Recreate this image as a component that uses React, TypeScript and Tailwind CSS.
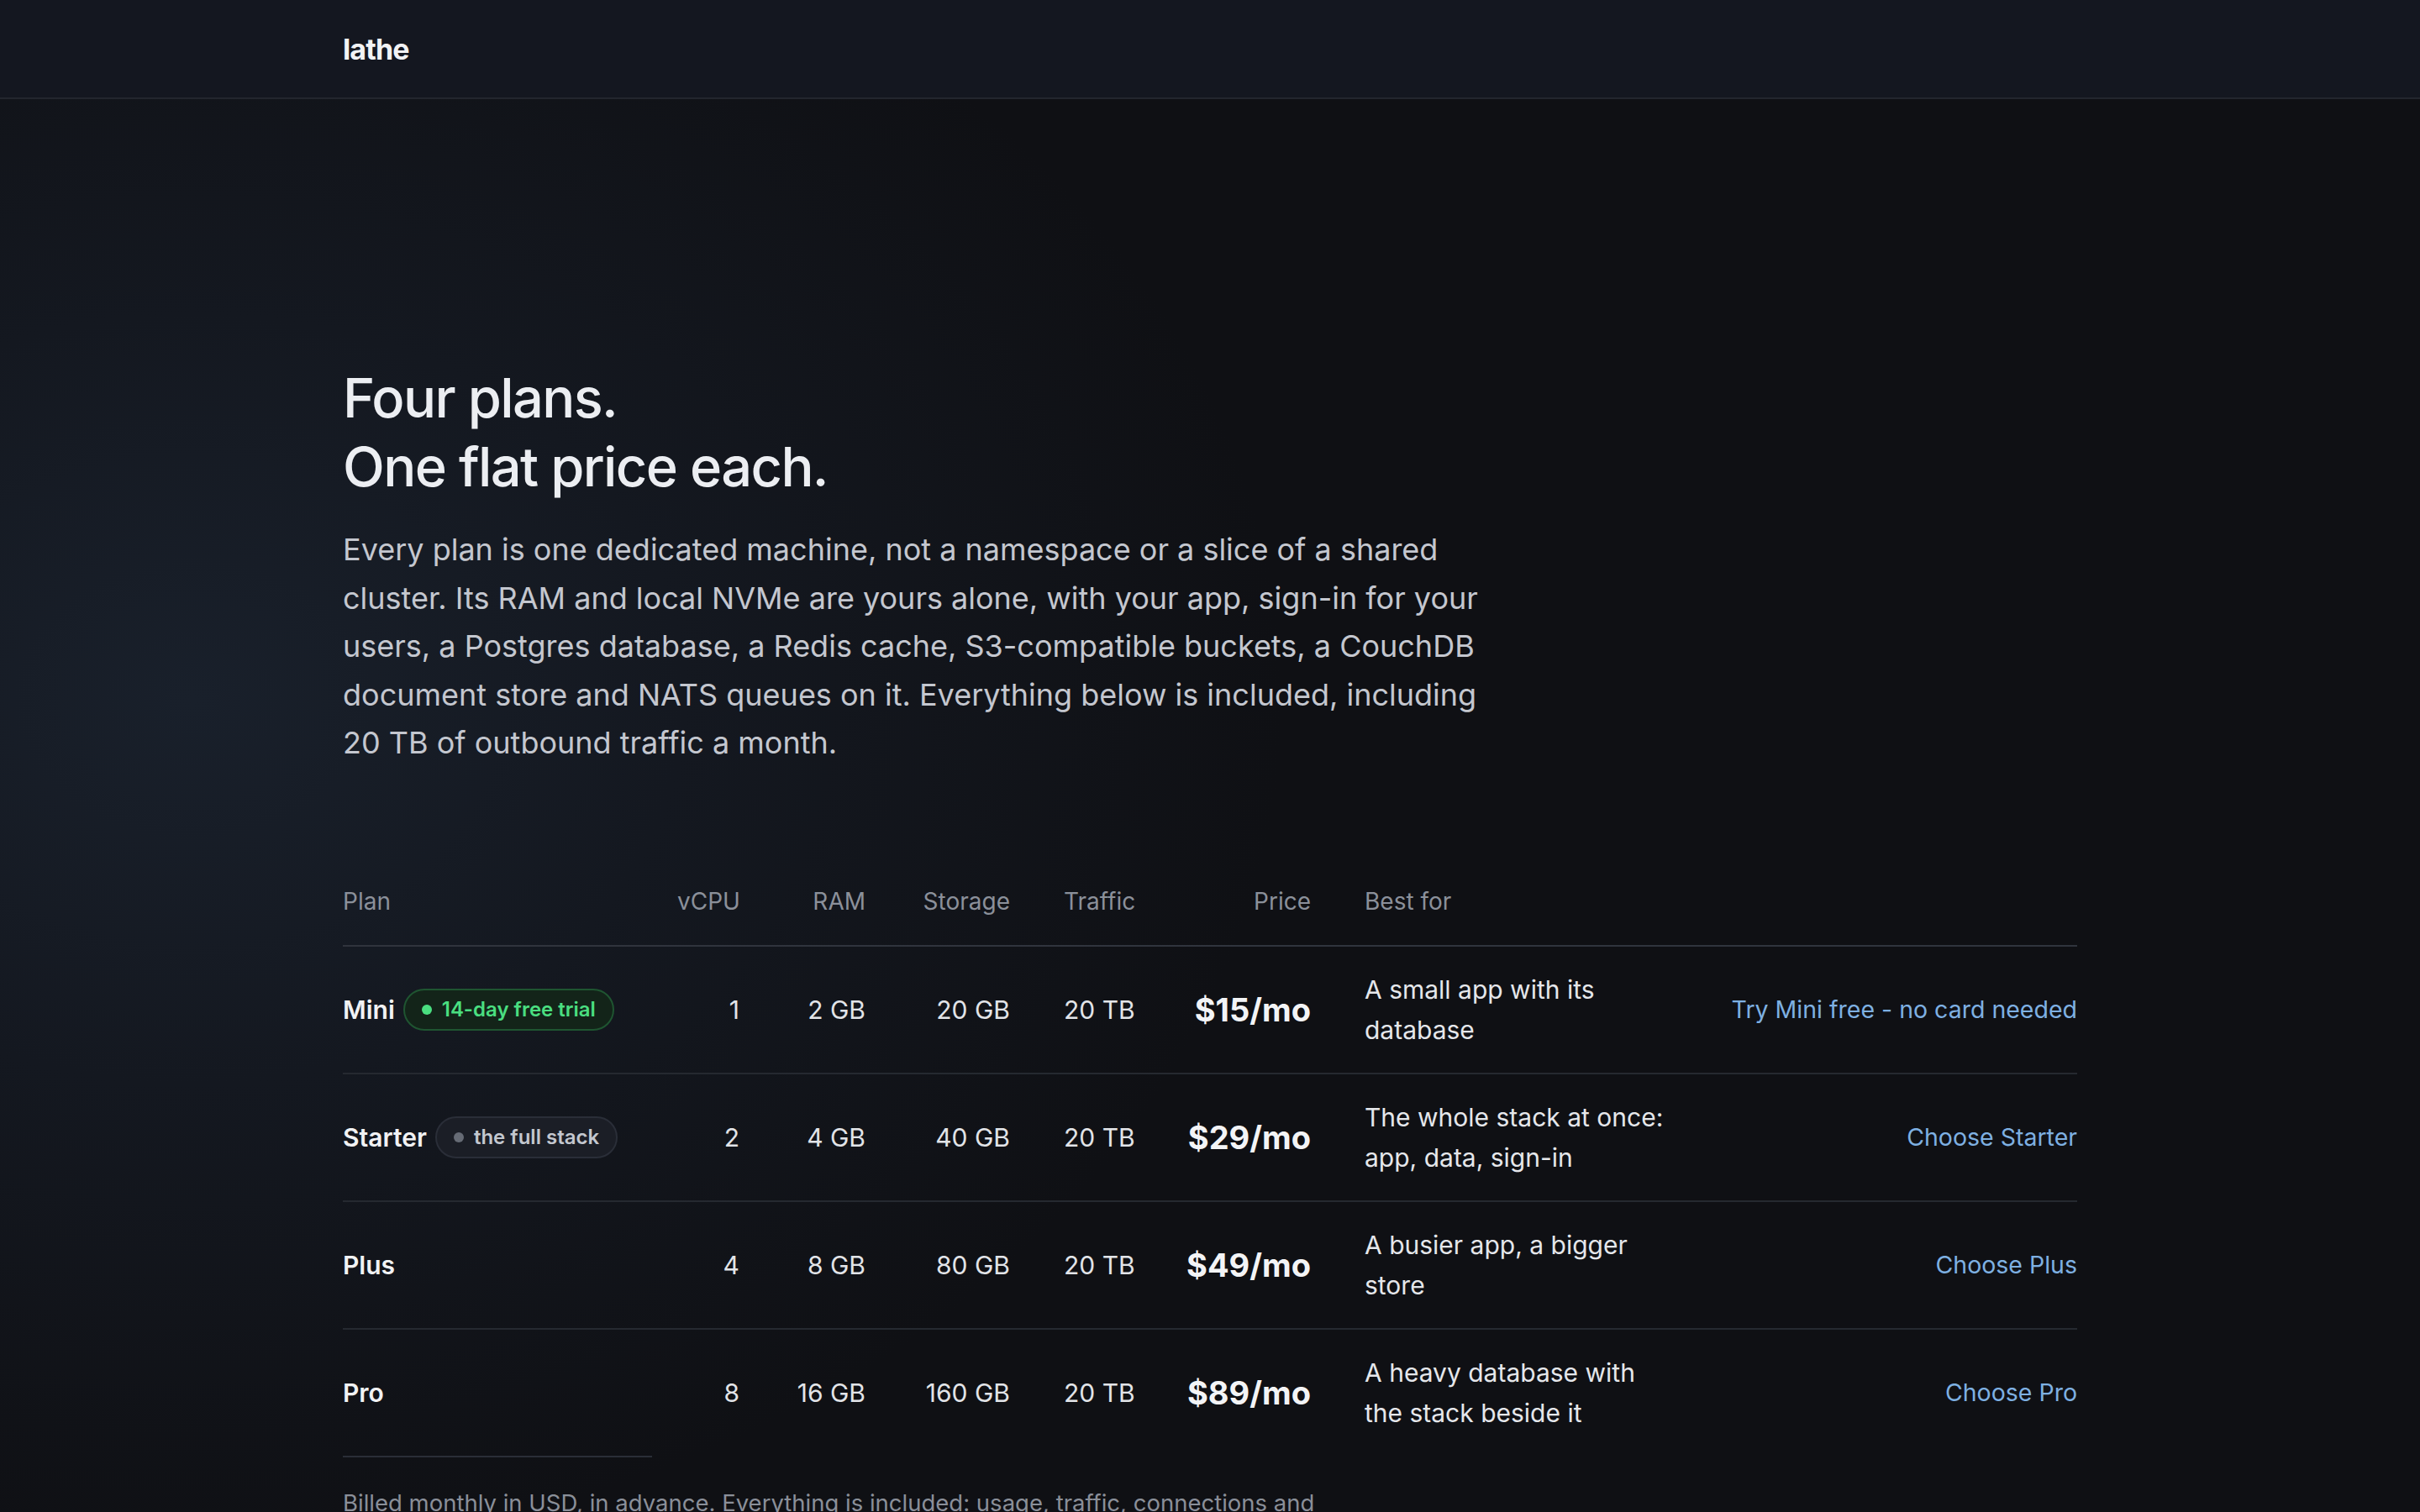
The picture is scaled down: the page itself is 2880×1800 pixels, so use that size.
import React from "react";

type Badge = { label: string; tone: "green" | "gray" };

type Plan = {
  name: string;
  badge?: Badge;
  vcpu: string;
  ram: string;
  storage: string;
  traffic: string;
  price: string;
  bestFor: string;
  cta: string;
};

const plans: Plan[] = [
  {
    name: "Mini",
    badge: { label: "14-day free trial", tone: "green" },
    vcpu: "1",
    ram: "2 GB",
    storage: "20 GB",
    traffic: "20 TB",
    price: "$15/mo",
    bestFor: "A small app with its database",
    cta: "Try Mini free - no card needed",
  },
  {
    name: "Starter",
    badge: { label: "the full stack", tone: "gray" },
    vcpu: "2",
    ram: "4 GB",
    storage: "40 GB",
    traffic: "20 TB",
    price: "$29/mo",
    bestFor: "The whole stack at once: app, data, sign-in",
    cta: "Choose Starter",
  },
  {
    name: "Plus",
    vcpu: "4",
    ram: "8 GB",
    storage: "80 GB",
    traffic: "20 TB",
    price: "$49/mo",
    bestFor: "A busier app, a bigger store",
    cta: "Choose Plus",
  },
  {
    name: "Pro",
    vcpu: "8",
    ram: "16 GB",
    storage: "160 GB",
    traffic: "20 TB",
    price: "$89/mo",
    bestFor: "A heavy database with the stack beside it",
    cta: "Choose Pro",
  },
];

const cols =
  "grid grid-cols-[334px_74px_86px_108px_82px_148px_360px_1fr] gap-x-16 items-center";

const PlanBadge = ({ badge }: { badge: Badge }) => {
  const green = badge.tone === "green";
  return (
    <span
      className={
        green
          ? "ml-[10px] inline-flex h-[50px] items-center gap-3 rounded-full border-2 border-[#1f5531] bg-[#132419] px-5 text-[24px] font-semibold text-[#4ade80] whitespace-nowrap"
          : "ml-[10px] inline-flex h-[50px] items-center gap-3 rounded-full border-2 border-[#2a2e38] bg-[#1b1e26] px-5 text-[24px] font-semibold text-[#c3c7cf] whitespace-nowrap"
      }
    >
      <span
        className={
          green
            ? "size-3 rounded-full bg-[#4ade80]"
            : "size-3 rounded-full bg-[#666b75]"
        }
      />
      {badge.label}
    </span>
  );
};

export default function App() {
  return (
    <div className="min-h-screen bg-[#0f1014] bg-[radial-gradient(ellipse_45%_55%_at_8%_45%,#19202b_0%,#141820_45%,transparent_100%)] font-['Inter',sans-serif] text-[#e6e7eb]">
      {/* HEADER */}
      <header className="h-[118px] border-b-2 border-[#23262e] bg-[#141720]">
        <div className="mx-auto flex h-full max-w-[2160px] items-center px-12">
          <span className="text-[34px] font-bold tracking-tight text-[#f2f3f5]">
            lathe
          </span>
        </div>
      </header>

      <main className="mx-auto max-w-[2160px] px-12 pt-[315px]">
        {/* HERO */}
        <h1 className="text-[65px] leading-[82px] font-medium tracking-tight text-[#eceef2]">
          Four plans.
          <br />
          One flat price each.
        </h1>
        <p className="mt-[29px] max-w-[1380px] text-[36px] leading-[1.6] text-[#c4c7cf]">
          Every plan is one dedicated machine, not a namespace or a slice of a
          shared cluster. Its RAM and local NVMe are yours alone, with your app,
          sign-in for your users, a Postgres database, a Redis cache,
          S3-compatible buckets, a CouchDB document store and NATS queues on
          it. Everything below is included, including 20 TB of outbound traffic
          a month.
        </p>

        {/* TABLE */}
        <div className="mt-[115px]">
          <div
            className={`${cols} border-b-2 border-[#30343d] pt-6 pb-8 text-[28px] leading-[40px] text-[#8b909a]`}
          >
            <div>Plan</div>
            <div className="text-right">vCPU</div>
            <div className="text-right">RAM</div>
            <div className="text-right">Storage</div>
            <div className="text-right">Traffic</div>
            <div className="text-right">Price</div>
            <div>Best for</div>
            <div />
          </div>

          {plans.map((plan, i) => (
            <div
              key={plan.name}
              className={`${cols} py-[27px] text-[30px] leading-[48px] ${
                i < plans.length - 1 ? "border-b-2 border-[#252930]" : ""
              }`}
            >
              <div className="flex items-center whitespace-nowrap">
                <span className="font-semibold text-[#f1f2f4]">{plan.name}</span>
                {plan.badge && <PlanBadge badge={plan.badge} />}
              </div>
              <div className="text-right text-[#e2e4e8]">{plan.vcpu}</div>
              <div className="text-right whitespace-nowrap text-[#e2e4e8]">
                {plan.ram}
              </div>
              <div className="text-right whitespace-nowrap text-[#e2e4e8]">
                {plan.storage}
              </div>
              <div className="text-right whitespace-nowrap text-[#e2e4e8]">
                {plan.traffic}
              </div>
              <div className="text-right text-[38px] font-bold whitespace-nowrap text-[#f3f4f6]">
                {plan.price}
              </div>
              <div className="text-[#e5e7eb]">{plan.bestFor}</div>
              <div className="text-right">
                <a href="#" className="whitespace-nowrap text-[28.5px] text-[#7eb0e2]">
                  {plan.cta}
                </a>
              </div>
            </div>
          ))}

          <div className="h-[2px] w-[368px] bg-[#2a2e37]" />
          <p className="max-w-[1200px] pt-[34px] text-[27.5px] leading-[40px] text-[#8a8f99]">
            Billed monthly in USD, in advance. Everything is included: usage,
            traffic, connections and requests. No metering, no overage charges
            and no surprise invoices.
          </p>
        </div>
      </main>
    </div>
  );
}
